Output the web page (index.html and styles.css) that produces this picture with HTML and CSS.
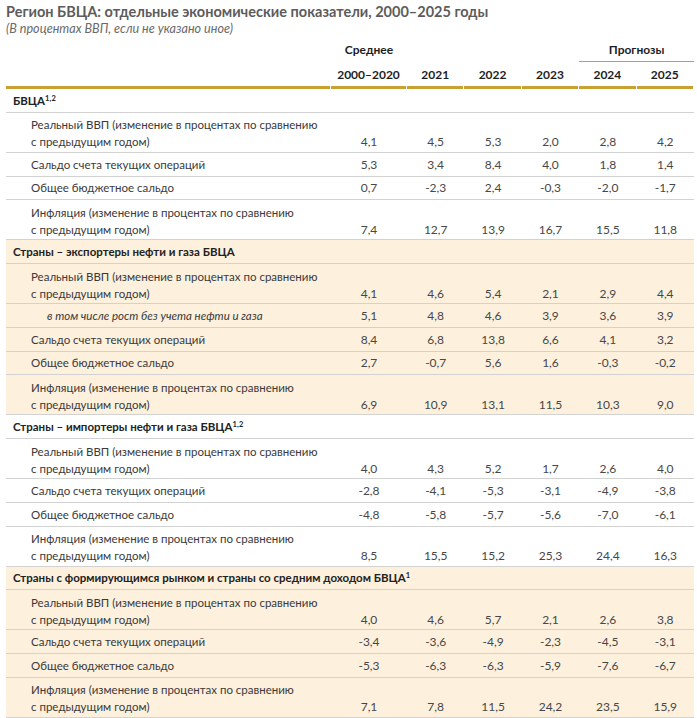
FILE: index.html
```html
<!DOCTYPE html>
<html lang="ru">
<head>
<meta charset="utf-8">
<link rel="stylesheet" href="styles.css">
</head>
<body>
<div class="page">
  <h1 class="title">Регион БВЦА: отдельные экономические показатели, 2000–2025 годы</h1>
  <p class="subtitle">(В процентах ВВП, если не указано иное)</p>
  <div class="table">
    <div class="row head1">
      <div></div><div class="num">Среднее</div><div></div><div></div><div></div><div class="forecast">Прогнозы</div>
    </div>
    <div class="row head2">
      <div></div><div class="num">2000–2020</div><div class="num">2021</div><div class="num">2022</div><div class="num">2023</div><div class="num">2024</div><div class="num">2025</div>
    </div>

    <div class="group">
      <div class="row sec"><div class="lab">БВЦА<sup>1,2</sup></div></div>
      <div class="row dbl"><div class="lab ind">Реальный ВВП (изменение в процентах по сравнению<br>с предыдущим годом)</div><div class="num">4,1</div><div class="num">4,5</div><div class="num">5,3</div><div class="num">2,0</div><div class="num">2,8</div><div class="num">4,2</div></div>
      <div class="row one"><div class="lab ind">Сальдо счета текущих операций</div><div class="num">5,3</div><div class="num">3,4</div><div class="num">8,4</div><div class="num">4,0</div><div class="num">1,8</div><div class="num">1,4</div></div>
      <div class="row one"><div class="lab ind">Общее бюджетное сальдо</div><div class="num">0,7</div><div class="num">-2,3</div><div class="num">2,4</div><div class="num">-0,3</div><div class="num">-2,0</div><div class="num">-1,7</div></div>
      <div class="row dbl"><div class="lab ind">Инфляция (изменение в процентах по сравнению<br>с предыдущим годом)</div><div class="num">7,4</div><div class="num">12,7</div><div class="num">13,9</div><div class="num">16,7</div><div class="num">15,5</div><div class="num">11,8</div></div>
    </div>

    <div class="group beige">
      <div class="row sec"><div class="lab">Страны – экспортеры нефти и газа БВЦА</div></div>
      <div class="row dbl"><div class="lab ind">Реальный ВВП (изменение в процентах по сравнению<br>с предыдущим годом)</div><div class="num">4,1</div><div class="num">4,6</div><div class="num">5,4</div><div class="num">2,1</div><div class="num">2,9</div><div class="num">4,4</div></div>
      <div class="row one"><div class="lab ind2">в том числе рост без учета нефти и газа</div><div class="num">5,1</div><div class="num">4,8</div><div class="num">4,6</div><div class="num">3,9</div><div class="num">3,6</div><div class="num">3,9</div></div>
      <div class="row one"><div class="lab ind">Сальдо счета текущих операций</div><div class="num">8,4</div><div class="num">6,8</div><div class="num">13,8</div><div class="num">6,6</div><div class="num">4,1</div><div class="num">3,2</div></div>
      <div class="row one"><div class="lab ind">Общее бюджетное сальдо</div><div class="num">2,7</div><div class="num">-0,7</div><div class="num">5,6</div><div class="num">1,6</div><div class="num">-0,3</div><div class="num">-0,2</div></div>
      <div class="row dbl"><div class="lab ind">Инфляция (изменение в процентах по сравнению<br>с предыдущим годом)</div><div class="num">6,9</div><div class="num">10,9</div><div class="num">13,1</div><div class="num">11,5</div><div class="num">10,3</div><div class="num">9,0</div></div>
    </div>

    <div class="group">
      <div class="row sec"><div class="lab">Страны – импортеры нефти и газа БВЦА<sup>1,2</sup></div></div>
      <div class="row dbl"><div class="lab ind">Реальный ВВП (изменение в процентах по сравнению<br>с предыдущим годом)</div><div class="num">4,0</div><div class="num">4,3</div><div class="num">5,2</div><div class="num">1,7</div><div class="num">2,6</div><div class="num">4,0</div></div>
      <div class="row one"><div class="lab ind">Сальдо счета текущих операций</div><div class="num">-2,8</div><div class="num">-4,1</div><div class="num">-5,3</div><div class="num">-3,1</div><div class="num">-4,9</div><div class="num">-3,8</div></div>
      <div class="row one"><div class="lab ind">Общее бюджетное сальдо</div><div class="num">-4,8</div><div class="num">-5,8</div><div class="num">-5,7</div><div class="num">-5,6</div><div class="num">-7,0</div><div class="num">-6,1</div></div>
      <div class="row dbl"><div class="lab ind">Инфляция (изменение в процентах по сравнению<br>с предыдущим годом)</div><div class="num">8,5</div><div class="num">15,5</div><div class="num">15,2</div><div class="num">25,3</div><div class="num">24,4</div><div class="num">16,3</div></div>
    </div>

    <div class="group beige">
      <div class="row sec"><div class="lab">Страны с формирующимся рынком и страны со средним доходом БВЦА<sup>1</sup></div></div>
      <div class="row dbl"><div class="lab ind">Реальный ВВП (изменение в процентах по сравнению<br>с предыдущим годом)</div><div class="num">4,0</div><div class="num">4,6</div><div class="num">5,7</div><div class="num">2,1</div><div class="num">2,6</div><div class="num">3,8</div></div>
      <div class="row one"><div class="lab ind">Сальдо счета текущих операций</div><div class="num">-3,4</div><div class="num">-3,6</div><div class="num">-4,9</div><div class="num">-2,3</div><div class="num">-4,5</div><div class="num">-3,1</div></div>
      <div class="row one"><div class="lab ind">Общее бюджетное сальдо</div><div class="num">-5,3</div><div class="num">-6,3</div><div class="num">-6,3</div><div class="num">-5,9</div><div class="num">-7,6</div><div class="num">-6,7</div></div>
      <div class="row dbl"><div class="lab ind">Инфляция (изменение в процентах по сравнению<br>с предыдущим годом)</div><div class="num">7,1</div><div class="num">7,8</div><div class="num">11,5</div><div class="num">24,2</div><div class="num">23,5</div><div class="num">15,9</div></div>
    </div>
  </div>
</div>
</body>
</html>
```

FILE: styles.css
```css
* { box-sizing: border-box; }
html, body { margin: 0; padding: 0; background: #ffffff; }
body {
  font-family: Lato, "Open Sans", sans-serif;
  color: #3a3a3a;
  font-size: 11.5px;
}
.page { padding: 3px 0 0 6px; width: 697px; }
.title {
  margin: 0;
  font-size: 14.5px;
  line-height: 18px;
  font-weight: 700;
  color: #5c5c5c;
}
.subtitle {
  margin: 0;
  font-size: 12.6px;
  line-height: 16px;
  font-style: italic;
  color: #6a6a6a;
}
.table { width: 688px; }
.row {
  display: grid;
  grid-template-columns: 325px 76px repeat(5, 57.4px);
  line-height: 17px;
}
.lab { white-space: nowrap; }
.head1 { height: 25px; align-items: end; padding-bottom: 4px; font-weight: 700; color: #1e1e1e; font-size: 12px; }
.head1 .forecast {
  grid-column: span 2;
  text-align: center;
  border-bottom: 1px solid #c9a032;
  margin-bottom: -4px;
  padding-bottom: 3px;
}
.head2 { height: 27px; font-weight: 700; color: #1e1e1e; font-size: 12.2px; }
.head2 > div {
  border-bottom: 3px solid #c9a032;
  margin-right: 1px;
  padding-top: 4px;
}
.group .row { border-bottom: 1px solid #d2d2d2; }
.beige { background: #fdf0dd; }
.sec { height: 23.75px; align-items: center; font-weight: 700; color: #222; }
.sec .lab { padding-left: 7px; grid-column: 1 / -1; }
.one { height: 23.75px; align-items: center; }
.dbl { height: 40px; align-items: end; padding: 3.5px 0 1.5px; }
.lab.ind { padding-left: 25px; }
.lab.ind2 { padding-left: 41px; font-style: italic; }
.num { text-align: center; color: #474747; font-size: 12px; }
.head1 .num, .head2 .num { color: #1e1e1e; }
sup { font-size: 7.5px; line-height: 0; vertical-align: 4px; letter-spacing: 0.2px; }
```
